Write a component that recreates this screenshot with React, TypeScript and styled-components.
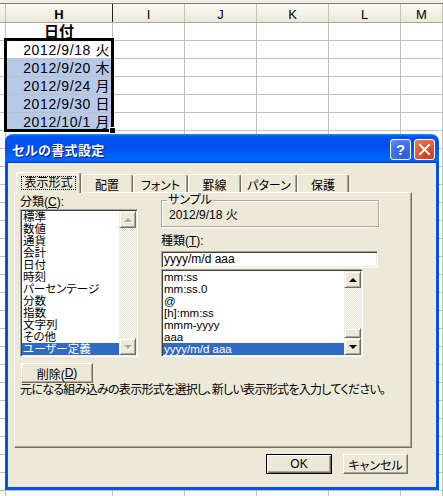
import React from 'react'
import styled, { createGlobalStyle } from 'styled-components'

const UI = `"Liberation Sans", "Noto Sans CJK JP", sans-serif`

const GlobalStyle = createGlobalStyle`
  html, body { margin: 0; padding: 0; background: #fff; overflow: hidden; }
  * { box-sizing: border-box; }
`

const COLS = [6, 107, 72, 72, 72, 72, 42]
const LETTERS = ['', 'H', 'I', 'J', 'K', 'L', 'M']
const DATES = ['2012/9/18 火', '2012/9/20 木', '2012/9/24 月', '2012/9/30 日', '2012/10/1 月']
const CATEGORIES = ['標準', '数値', '通貨', '会計', '日付', '時刻', 'パーセンテージ', '分数', '指数', '文字列', 'その他', 'ユーザー定義']
const FORMATS = ['mm:ss', 'mm:ss.0', '@', '[h]:mm:ss', 'mmm-yyyy', 'aaa', 'yyyy/m/d aaa']
const TABS = [
  { label: '表示形式', w: 65, active: true },
  { label: '配置', w: 52 },
  { label: 'フォント', w: 55 },
  { label: '罫線', w: 53 },
  { label: 'パターン', w: 56 },
  { label: '保護', w: 52 },
]

/* ---------- spreadsheet behind ---------- */

const Sheet = styled.div`
  position: relative;
  width: 443px;
  height: 496px;
  overflow: hidden;
  font-family: ${UI};
  background: #fff;
`
const TopStrip = styled.div`
  height: 3px;
  background: #f1efe2;
`
const HeadRow = styled.div`
  display: grid;
  grid-template-columns: ${COLS.map(c => c + 'px').join(' ')};
  height: 20px;
  border-top: 1px solid #7a7a7a;
  border-bottom: 1px solid #aca899;
`
const HeadCell = styled.div<{ $sel?: boolean }>`
  display: flex;
  align-items: center;
  justify-content: center;
  padding-top: 2px;
  background: linear-gradient(#fbfaf6, #ebe8da);
  border-right: 1px solid ${p => (p.$sel ? '#222' : '#c5c2b2')};
  font-size: 13px;
  font-weight: ${p => (p.$sel ? 'bold' : 'normal')};
  color: #000;
`
const Row = styled.div`
  display: grid;
  grid-template-columns: ${COLS.map(c => c + 'px').join(' ')};
  height: 18px;
  border-bottom: 1px solid #c0c0c0;
`
const Cell = styled.div<{ $fill?: boolean; $center?: boolean; $bold?: boolean }>`
  display: flex;
  align-items: flex-end;
  justify-content: ${p => (p.$center ? 'center' : 'flex-end')};
  padding: 0 ${p => (p.$center ? 0 : 2)}px 0 0;
  background: ${p => (p.$fill ? '#b7c9e8' : '#fff')};
  border-right: 1px solid #c0c0c0;
  font-size: ${p => (p.$center ? 15 : 14)}px;
  line-height: 16px;
  letter-spacing: ${p => (p.$center ? 0 : 0.6)}px;
  font-weight: ${p => (p.$bold ? 'bold' : 'normal')};
  white-space: nowrap;
  overflow: hidden;
`
const Selection = styled.div`
  position: absolute;
  left: 4px;
  top: 38px;
  width: 110px;
  height: 94px;
  border: 3px solid #000;
  pointer-events: none;
`
const FillHandle = styled.div`
  position: absolute;
  left: 109px;
  top: 127px;
  width: 7px;
  height: 7px;
  background: #000;
  border: 1px solid #fff;
`

/* ---------- dialog ---------- */

const Dialog = styled.div`
  position: absolute;
  left: 5px;
  top: 134px;
  width: 434px;
  height: 356px;
  display: flex;
  flex-direction: column;
  border-radius: 8px 8px 0 0;
  overflow: hidden;
  font-family: ${UI};
  font-size: 12px;
  font-feature-settings: 'palt';
  color: #000;
`
const TitleBar = styled.div`
  height: 29px;
  flex: none;
  display: flex;
  align-items: center;
  justify-content: space-between;
  padding: 1px 4px 0 7px;
  background: linear-gradient(180deg, #0997ff, #0053ee 8%, #0050ee 40%, #06f 88%, #06f 93%, #005bff 95%, #003dd7 96%, #003dd7);
`
const Title = styled.div`
  color: #fff;
  font-weight: bold;
  font-size: 13px;
  letter-spacing: 0.4px;
  text-shadow: 1px 1px #0f1089;
`
const TitleButtons = styled.div`
  display: flex;
  gap: 3px;
`
const CaptionButton = styled.div<{ $kind: 'help' | 'close' }>`
  width: 21px;
  height: 21px;
  border: 1px solid #fff;
  border-radius: 3px;
  display: flex;
  align-items: center;
  justify-content: center;
  color: #fff;
  font-weight: bold;
  font-size: 15px;
  font-family: "Liberation Sans", sans-serif;
  background: ${p =>
    p.$kind === 'help'
      ? 'radial-gradient(circle at 70% 80%, #2a5be0, #3f74f0 60%, #6b98f8)'
      : 'radial-gradient(circle at 70% 80%, #c73c1a, #e0603a 60%, #ee8a68)'};
`
const Body = styled.div`
  flex: 1;
  display: flex;
  flex-direction: column;
  background: #ece9d8;
  border: 3px solid #0054e3;
  border-top: none;
  padding: 9px 0 0 6px;
`
const TabStrip = styled.div`
  display: flex;
  align-items: flex-end;
  height: 20px;
  padding-left: 2px;
  position: relative;
  z-index: 1;
`
const Tab = styled.div<{ $w: number; $active?: boolean }>`
  width: ${p => p.$w}px;
  height: ${p => (p.$active ? 21 : 18)}px;
  margin-bottom: ${p => (p.$active ? -1 : 0)}px;
  display: flex;
  align-items: center;
  justify-content: center;
  padding-top: ${p => (p.$active ? 0 : 1)}px;
  background: #ece9d8;
  border-top: 1px solid #fff;
  border-left: 1px solid #fff;
  border-right: 1px solid #716f64;
  box-shadow: inset -1px 0 #aca899;
  border-radius: 3px 3px 0 0;
  white-space: nowrap;
`
const Focus = styled.span`
  outline: 1px dotted #000;
  outline-offset: 0;
  padding: 0 2px;
  line-height: 12px;
`
const Panel = styled.div`
  width: 398px;
  height: 256px;
  flex: none;
  display: flex;
  flex-direction: column;
  padding: 1px 0 0 5px;
  border-top: 1px solid #fff;
  border-left: 1px solid #fff;
  border-right: 1px solid #716f64;
  border-bottom: 1px solid #716f64;
  box-shadow: inset -1px -1px #aca899;
`
const Columns = styled.div`
  display: flex;
  gap: 23px;
`
const Column = styled.div<{ $w: number }>`
  width: ${p => p.$w}px;
  display: flex;
  flex-direction: column;
`
const Label = styled.div<{ $mt?: number; $mb?: number }>`
  line-height: 14px;
  height: 14px;
  margin-top: ${p => p.$mt ?? 0}px;
  margin-bottom: ${p => p.$mb ?? 0}px;
  white-space: nowrap;
`
const Sunken = styled.div<{ $w: number; $h: number; $mt?: number }>`
  width: ${p => p.$w}px;
  height: ${p => p.$h}px;
  margin-top: ${p => p.$mt ?? 0}px;
  background: #fff;
  border-top: 1px solid #aca899;
  border-left: 1px solid #aca899;
  border-right: 1px solid #fff;
  border-bottom: 1px solid #fff;
  box-shadow: inset 1px 1px #404040, inset -1px -1px #f1efe2;
  padding: 1px;
  display: flex;
  overflow: hidden;
`
const Items = styled.div`
  flex: 1;
  overflow: hidden;
`
const Item = styled.div<{ $sel?: boolean }>`
  height: 12px;
  line-height: 12px;
  font-size: 11.5px;
  padding-left: 1px;
  white-space: nowrap;
  background: ${p => (p.$sel ? '#316ac5' : 'transparent')};
  color: ${p => (p.$sel ? '#fff' : '#000')};
`
const InputText = styled.div`
  line-height: 13px;
  padding-left: 1px;
`
const ScrollBar = styled.div`
  width: 17px;
  flex: none;
  display: flex;
  flex-direction: column;
`
const ScrollBtn = styled.div`
  height: 17px;
  flex: none;
  display: flex;
  align-items: center;
  justify-content: center;
  background: #ece9d8;
  border-top: 1px solid #f1efe2;
  border-left: 1px solid #f1efe2;
  border-right: 1px solid #716f64;
  border-bottom: 1px solid #716f64;
  box-shadow: inset 1px 1px #fff, inset -1px -1px #aca899;
`
const Arrow = styled.div<{ $down?: boolean; $off?: boolean }>`
  width: 0;
  height: 0;
  border-left: 4px solid transparent;
  border-right: 4px solid transparent;
  ${p => (p.$down ? 'border-top' : 'border-bottom')}: 4px solid ${p => (p.$off ? '#aca899' : '#000')};
  filter: ${p => (p.$off ? 'drop-shadow(1px 1px 0 #fff)' : 'none')};
`
const Track = styled.div`
  flex: 1;
  display: flex;
  flex-direction: column;
  justify-content: flex-end;
  background-color: #fff;
  background-image: repeating-conic-gradient(#e3e0ce 0% 25%, #fff 0% 50%);
  background-size: 2px 2px;
`
const Thumb = styled(ScrollBtn)`
  height: 10px;
`
const GroupBox = styled.fieldset`
  margin: 0;
  padding: 0 0 2px 7px;
  border: 1px solid #aca899;
  box-shadow: inset 1px 1px #fff, 1px 1px #fff;
  min-width: 0;
`
const Legend = styled.legend`
  padding: 0 1px;
  margin-left: -2px;
  line-height: 12px;
`
const SampleText = styled.div`
  line-height: 17px;
  padding-top: 1px;
`
const Button = styled.div<{ $w: number; $default?: boolean }>`
  width: ${p => p.$w}px;
  height: 20px;
  flex: none;
  display: flex;
  align-items: center;
  justify-content: center;
  background: #ece9d8;
  white-space: nowrap;
  ${p =>
    p.$default
      ? `border: 1px solid #000; box-shadow: inset 1px 1px #fff, inset -1px -1px #716f64, inset -2px -2px #aca899;`
      : `border-top: 1px solid #fff; border-left: 1px solid #fff; border-right: 1px solid #716f64; border-bottom: 1px solid #716f64; box-shadow: inset -1px -1px #aca899;`}
`
const DeleteButton = styled(Button)`
  margin: 6px 0 0 1px;
`
const Hint = styled.div`
  margin-top: 1px;
  line-height: 13px;
  letter-spacing: -0.7px;
  white-space: nowrap;
`
const Footer = styled.div`
  width: 398px;
  display: flex;
  justify-content: flex-end;
  gap: 11px;
  padding-right: 4px;
  margin-top: 6px;
`

const CloseIcon = () => (
  <svg width="13" height="13" viewBox="0 0 13 13">
    <path d="M2 2 L11 11 M11 2 L2 11" stroke="#fff" strokeWidth="2" strokeLinecap="square" />
  </svg>
)

const Scroll = ({ off, thumb }: { off?: boolean; thumb?: boolean }) => (
  <ScrollBar>
    <ScrollBtn><Arrow $off={off} /></ScrollBtn>
    <Track>{thumb && <Thumb />}</Track>
    <ScrollBtn><Arrow $down $off={off} /></ScrollBtn>
  </ScrollBar>
)

export default function App() {
  const rows = Array.from({ length: 27 }, (_, i) => i)
  return (
    <>
      <GlobalStyle />
      <Sheet>
        <TopStrip />
        <HeadRow>
          {LETTERS.map((l, i) => (
            <HeadCell key={i} $sel={l === 'H'}>{l}</HeadCell>
          ))}
        </HeadRow>
        {rows.map(r => (
          <Row key={r}>
            {COLS.map((_, c) => {
              if (c === 1 && r === 0) return <Cell key={c} $center $bold>日付</Cell>
              if (c === 1 && r >= 1 && r <= 5)
                return <Cell key={c} $fill={r >= 2}>{DATES[r - 1]}</Cell>
              return <Cell key={c} />
            })}
          </Row>
        ))}
        <Selection />
        <FillHandle />

        <Dialog>
          <TitleBar>
            <Title>セルの書式設定</Title>
            <TitleButtons>
              <CaptionButton $kind="help">?</CaptionButton>
              <CaptionButton $kind="close"><CloseIcon /></CaptionButton>
            </TitleButtons>
          </TitleBar>
          <Body>
            <TabStrip>
              {TABS.map(t => (
                <Tab key={t.label} $w={t.w} $active={t.active}>
                  {t.active ? <Focus>{t.label}</Focus> : t.label}
                </Tab>
              ))}
            </TabStrip>
            <Panel>
              <Columns>
                <Column $w={118}>
                  <Label $mt={1}>分類(<u>C</u>):</Label>
                  <Sunken $w={118} $h={148}>
                    <Items>
                      {CATEGORIES.map((c, i) => (
                        <Item key={c} $sel={i === CATEGORIES.length - 1}>{c}</Item>
                      ))}
                    </Items>
                    <Scroll off />
                  </Sunken>
                </Column>
                <Column $w={218}>
                  <GroupBox>
                    <Legend>サンプル</Legend>
                    <SampleText>2012/9/18 火</SampleText>
                  </GroupBox>
                  <Label $mt={7} $mb={3}>種類(<u>T</u>):</Label>
                  <Sunken $w={217} $h={17}>
                    <InputText>yyyy/m/d aaa</InputText>
                  </Sunken>
                  <Sunken $w={202} $h={88} $mt={1}>
                    <Items>
                      {FORMATS.map((f, i) => (
                        <Item key={f} $sel={i === FORMATS.length - 1}>{f}</Item>
                      ))}
                    </Items>
                    <Scroll thumb />
                  </Sunken>
                </Column>
              </Columns>
              <DeleteButton $w={72}>削除(<u>D</u>)</DeleteButton>
              <Hint>元になる組み込みの表示形式を選択し、新しい表示形式を入力してください。</Hint>
            </Panel>
            <Footer>
              <Button $w={66} $default>OK</Button>
              <Button $w={65}>キャンセル</Button>
            </Footer>
          </Body>
        </Dialog>
      </Sheet>
    </>
  )
}
